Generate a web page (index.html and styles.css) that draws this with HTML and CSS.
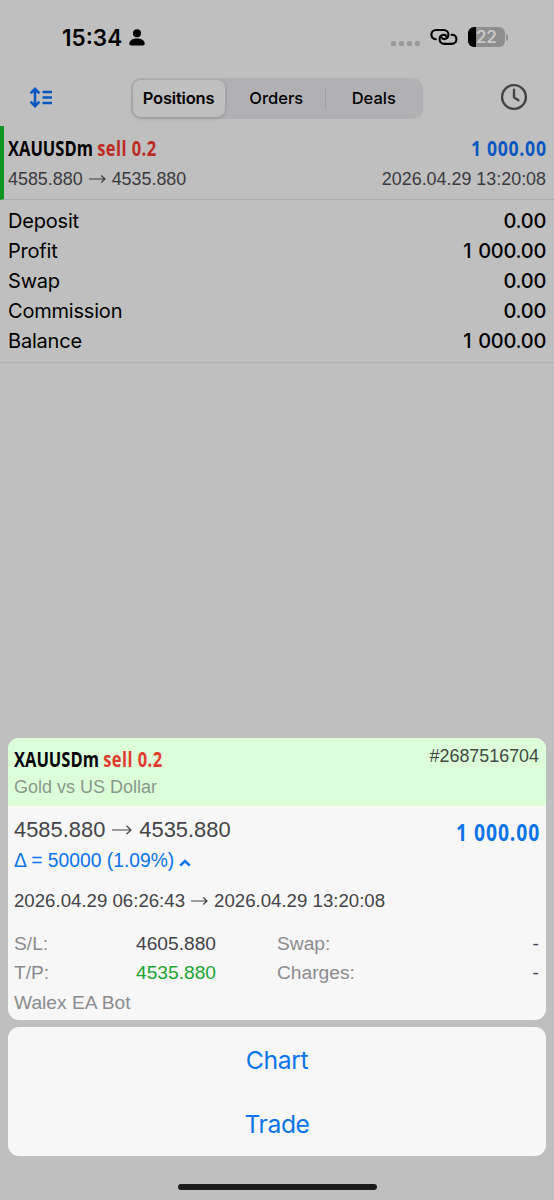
FILE: index.html
```html
<!DOCTYPE html>
<html lang="en">
<head>
<meta charset="utf-8">
<title>History</title>
<link rel="stylesheet" href="styles.css">
</head>
<body>
<div class="screen">
  <header class="status">
    <div class="status-left">
      <span class="time">15:34</span>
      <svg class="person" width="16" height="17" viewBox="0 0 16 17"><circle cx="8" cy="4.200" r="4"/><path d="M.3 14.600C.3 11.300 4 9.500 8 9.500s7.700 1.800 7.700 5.100c0 1.300-.6 1.900-1.800 1.900H2.100C.9 16.500.3 15.900.3 14.600z"/></svg>
    </div>
    <div class="status-right">
      <div class="dots"><i></i><i></i><i></i><i></i></div>
      <svg class="link" width="28" height="18" viewBox="0 0 28 18"><path d="M5.800 11.200C3.300 11 1.400 9.200 1.400 6.600 1.400 3.900 3.400 2 6.200 2h7.400c2.800 0 4.800 1.900 4.800 4.600 0 2.500-1.700 4.400-4.200 4.500-1.500 0-2.300-.8-2.700-1.800"/><path d="M21.500 6.800c2.900 0 4.900 1.800 4.900 4.500S24.400 15.900 21.600 15.900h-7.200c-2.800 0-4.800-1.900-4.800-4.600 0-2.500 1.700-4.400 4.200-4.500 1.500 0 2.300.8 2.700 1.800"/></svg>
      <div class="battery"><span>22</span></div>
      <div class="battery-cap"></div>
    </div>
  </header>

  <nav class="nav">
    <svg class="sort" width="24" height="21" viewBox="0 0 24 21"><path d="M6 2.300v16.400M1.600 6.300 6 1.900l4.400 4.400M1.600 14.700 6 19.100l4.400-4.400"/><path d="M13.500 5H23M13.500 10.500H23M13.500 16H23"/></svg>
    <div class="tabs">
      <div class="tab active"><span>Positions</span></div>
      <div class="tab"><span>Orders</span></div>
      <div class="tab divided"><span>Deals</span></div>
    </div>
    <svg class="clock" width="28" height="28" viewBox="0 0 28 28"><circle cx="14" cy="14" r="11.900"/><path d="M14 6.800v7.600l4.400 2.800"/></svg>
  </nav>

  <section class="position">
    <div class="line title-line">
      <div class="cond">XAUUSDm <span class="sell">sell 0.2</span></div>
      <div class="cond right money">1 000.00</div>
    </div>
    <div class="line detail-line">
      <div class="prices"><span>4585.880</span><svg class="arrow" width="17" height="10" viewBox="0 0 17 10"><path d="M0 5h16M12.200 1.500 16 5l-3.800 3.500"/></svg><span>4535.880</span></div>
      <div>2026.04.29 13:20:08</div>
    </div>
  </section>

  <section class="summary">
    <div class="row"><span>Deposit</span><span class="value">0.00</span></div>
    <div class="row"><span>Profit</span><span class="value">1 000.00</span></div>
    <div class="row"><span>Swap</span><span class="value">0.00</span></div>
    <div class="row"><span>Commission</span><span class="value">0.00</span></div>
    <div class="row"><span>Balance</span><span class="value">1 000.00</span></div>
  </section>

  <main class="sheets">
    <article class="card">
      <div class="card-head">
        <div>
          <div class="cond">XAUUSDm <span class="sell">sell 0.2</span></div>
          <div class="subtitle">Gold vs US Dollar</div>
        </div>
        <div class="ticket">#2687516704</div>
      </div>
      <div class="card-body">
        <div class="line">
          <div class="prices large"><span>4585.880</span><svg class="arrow" width="20" height="12" viewBox="0 0 20 12"><path d="M0 6h19M14.500 1.800 19 6l-4.500 4.200"/></svg><span>4535.880</span></div>
          <div class="cond right money big">1 000.00</div>
        </div>
        <div class="delta"><span>Δ = 50000 (1.09%)</span><svg width="12" height="8" viewBox="0 0 12 8"><path d="M1.200 6.600 6 2l4.800 4.600"/></svg></div>
        <div class="prices dates"><span>2026.04.29 06:26:43</span><svg class="arrow" width="17" height="10" viewBox="0 0 17 10"><path d="M0 5h16M12.200 1.500 16 5l-3.800 3.500"/></svg><span>2026.04.29 13:20:08</span></div>
        <div class="grid">
          <span>S/L:</span><span class="num">4605.880</span><span>Swap:</span><span class="num end">-</span>
          <span>T/P:</span><span class="num green">4535.880</span><span>Charges:</span><span class="num end">-</span>
          <span class="comment">Walex EA Bot</span>
        </div>
      </div>
    </article>
    <div class="actions">
      <div class="action">Chart</div>
      <div class="action">Trade</div>
    </div>
  </main>
  <div class="home"></div>
</div>
</body>
</html>
```
FILE: styles.css
```css
* { box-sizing: border-box; }
body { margin: 0; }
svg { display: block; fill: none; flex: none; }
.screen {
  width: 554px; height: 1200px; overflow: hidden;
  display: flex; flex-direction: column;
  background: #bfbfbf; color: #000;
  font-family: "Liberation Sans", Arial, sans-serif;
}

.status { height: 76px; display: flex; justify-content: space-between; padding: 0 46px 0 62px; font-family: Inter, sans-serif; }
.status-left { display: flex; align-items: flex-start; padding-top: 24px; }
.time { font-size: 22.500px; font-weight: 600; line-height: 28px; width: 66.500px; letter-spacing: 0; }
.person { fill: #000; margin-top: 5px; }
.status-right { display: flex; padding-top: 27px; }
.dots { display: flex; gap: 3px; padding-top: 14px; margin-right: 10px; }
.dots i { width: 5px; height: 5px; border-radius: 1.500px; background: #999; }
.link { stroke: #000; stroke-width: 2.100; stroke-linecap: round; margin: 1px 10px 0 0; }
.battery {
  width: 37px; height: 20px; border-radius: 6px; overflow: hidden;
  background: linear-gradient(90deg, #000 8px, #8e8e8e 8px);
  color: #c8c8c8; font-size: 17px; font-weight: 600; line-height: 20px; padding-left: 8px;
  letter-spacing: -.4px;
}
.battery-cap { width: 2px; height: 7px; margin: 7px 0 0 1px; border-radius: 0 2px 2px 0; background: #929292; }

.nav { height: 50px; display: flex; justify-content: space-between; align-items: flex-start; padding: 2px 26px 0 29px; }
.sort { stroke: #0757c2; stroke-width: 2.600; margin-top: 9px; }
.clock { stroke: #444; stroke-width: 2.400; stroke-linecap: round; margin-top: 5px; }
.tabs {
  display: flex; width: 292px; height: 41px; padding: 2px 0 2px 2px; border-radius: 10px;
  background: #b1b1b4; margin: 0 25px 0 25px;
  font: 500 16.500px/37px Inter, sans-serif;
}
.tab { flex: 1 0 0; text-align: center; display: flex; align-items: center; justify-content: center; }
.tab.active { background: #bfbfbf; border-radius: 8px; font-weight: 600; letter-spacing: -.2px; flex: 0 0 92px; margin-right: 3px; box-shadow: 0 1px 4px rgba(0,0,0,.18); }
.tab.divided { position: relative; }
.tab.divided::before { content: ""; position: absolute; left: 0; top: 7px; height: 23px; width: 1px; background: #a0a0a3; }

.line { display: flex; justify-content: space-between; }
.cond { font: 700 22px/28px "Open Sans", sans-serif; white-space: nowrap; transform: scaleX(.75); transform-origin: left; }
.cond.right { transform: scaleX(.8); transform-origin: right; letter-spacing: .9px; margin-right: -.9px; }
.sell { color: #bd2b22; letter-spacing: .6px; }
.money { color: #0757c2; }

.position { height: 74px; padding: 7px 8px 0 4px; border-left: 4px solid #0f9522; border-bottom: 1px solid #acacae; }
.detail-line { margin-top: 6px; font-size: 17.900px; line-height: 24px; color: #3a3a3e; }
.prices { display: flex; align-items: center; }
.arrow { stroke: currentColor; stroke-width: 1.200; margin: 0 6px; }

.summary { height: 163px; padding: 6px 8px 0; border-bottom: 1px solid #b1b1b3; font: 400 20px/30px Inter, sans-serif; letter-spacing: -.2px; }
.row { display: flex; justify-content: space-between; }
.value { font-weight: 500; letter-spacing: -.3px; word-spacing: 2px; }

.sheets { margin-top: 375px; padding: 0 8px; display: flex; flex-direction: column; gap: 7px; }
.card { height: 282px; border-radius: 11px; overflow: hidden; background: #f7f7f7; }
.card-head { height: 68px; background: #dcffda; display: flex; justify-content: space-between; padding: 6px 7px 0 6px; }
.card .sell { color: #e23a2e; }
.card .money { color: #0b74ea; }
.subtitle { font-size: 18px; line-height: 24px; margin-top: 3px; color: #8a988a; }
.ticket { font-size: 17.900px; line-height: 24px; color: #414a42; }
.card-body { padding: 9px 7px 0 6px; }
.large { font-size: 21.900px; line-height: 30px; color: #444448; }
.large .arrow { margin: 0 7px; }
.card .cond.big { line-height: 30px; font-size: 23px; margin: 2px -1px -2px 0; letter-spacing: 1.100px; transform: scaleX(.84); }
.delta { display: flex; align-items: center; margin-top: 4px; height: 24px; font-size: 19.300px; line-height: 24px; color: #0b74ea; }
.delta svg { stroke: #0b74ea; stroke-width: 2.600; margin: 4px 0 0 5px; }
.dates { margin-top: 16px; font-size: 18.650px; line-height: 24px; color: #444448; }
.grid { display: grid; grid-template-columns: 122px 141px 1fr 20px; grid-auto-rows: 29.500px; margin-top: 15.500px; font-size: 19.200px; line-height: 29.500px; color: #8b8b8e; }
.num { color: #444448; }
.green { color: #1ca532; }
.end { text-align: right; }
.comment { grid-column: 1 / -1; }
.actions { height: 129px; border-radius: 11px; background: #f7f7f7; padding-top: .5px; }
.action { text-align: center; height: 64.500px; font: 400 24.700px/64.500px Inter, sans-serif; letter-spacing: -.4px; color: #0b74ea; }
.home { width: 199px; height: 6px; border-radius: 3px; background: #1b1b1b; margin: 27.500px auto 0; }
```
